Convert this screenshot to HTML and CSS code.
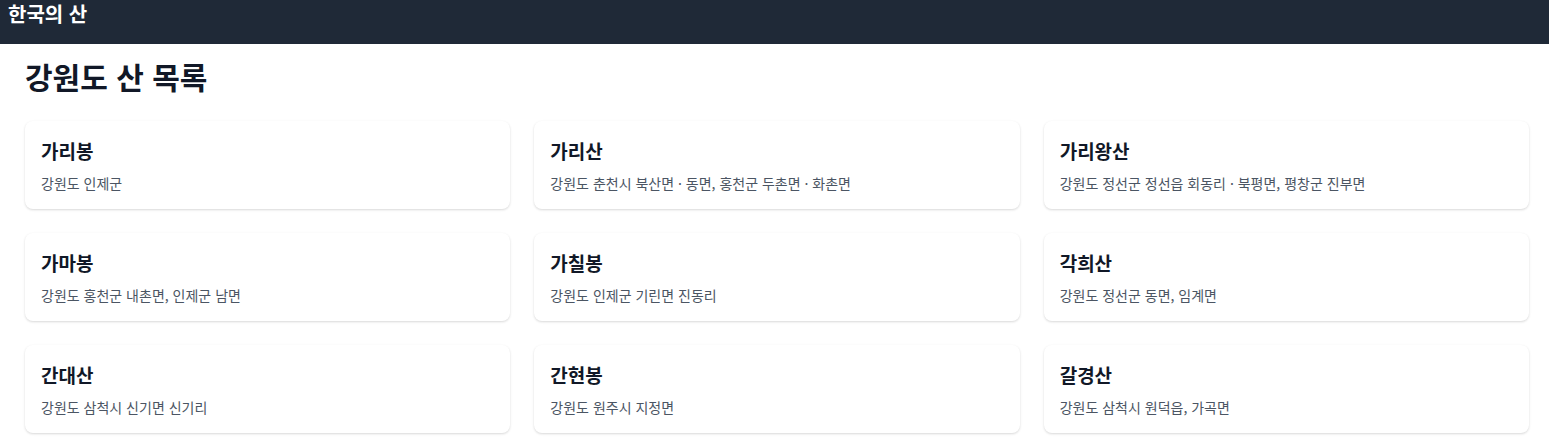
FILE: index.html
```html
<!DOCTYPE html>
<html lang="ko">
<head>
    <meta charset="utf-8">
    <title>한국의 산</title>
    <link rel="stylesheet" href="styles.css">
</head>
<body>
    <header class="top-bar">
        <span class="site-name">한국의 산</span>
    </header>

    <main class="page">
        <h1 class="page-title">강원도 산 목록</h1>

        <div class="mountain-grid">
            <div class="mountain-card">
                <h2 class="mountain-name">가리봉</h2>
                <p class="mountain-place">강원도 인제군</p>
            </div>
            <div class="mountain-card">
                <h2 class="mountain-name">가리산</h2>
                <p class="mountain-place">강원도 춘천시 북산면 · 동면, 홍천군 두촌면 · 화촌면</p>
            </div>
            <div class="mountain-card">
                <h2 class="mountain-name">가리왕산</h2>
                <p class="mountain-place">강원도 정선군 정선읍 회동리 · 북평면, 평창군 진부면</p>
            </div>
            <div class="mountain-card">
                <h2 class="mountain-name">가마봉</h2>
                <p class="mountain-place">강원도 홍천군 내촌면, 인제군 남면</p>
            </div>
            <div class="mountain-card">
                <h2 class="mountain-name">가칠봉</h2>
                <p class="mountain-place">강원도 인제군 기린면 진동리</p>
            </div>
            <div class="mountain-card">
                <h2 class="mountain-name">각희산</h2>
                <p class="mountain-place">강원도 정선군 동면, 임계면</p>
            </div>
            <div class="mountain-card">
                <h2 class="mountain-name">간대산</h2>
                <p class="mountain-place">강원도 삼척시 신기면 신기리</p>
            </div>
            <div class="mountain-card">
                <h2 class="mountain-name">간현봉</h2>
                <p class="mountain-place">강원도 원주시 지정면</p>
            </div>
            <div class="mountain-card">
                <h2 class="mountain-name">갈경산</h2>
                <p class="mountain-place">강원도 삼척시 원덕읍, 가곡면</p>
            </div>
        </div>
    </main>
</body>
</html>
```

FILE: styles.css
```css
body {
    margin: 0;
    font-family: "Noto Sans CJK KR", "Noto Sans", sans-serif;
    background-color: #ffffff;
    color: #111827;
}

.top-bar {
    background-color: #1f2937;
    color: #ffffff;
    padding: 0 8px 16px 8px;
}

.site-name {
    display: block;
    font-size: 20px;
    font-weight: bold;
    line-height: 28px;
}

.page {
    padding: 14px 20px 24px 25px;
}

.page-title {
    font-size: 30px;
    font-weight: bold;
    line-height: 36px;
    margin: 0 0 27px 0;
}

.mountain-grid {
    display: grid;
    grid-template-columns: repeat(3, 1fr);
    gap: 24px;
}

.mountain-card {
    background-color: #ffffff;
    border-radius: 8px;
    padding: 16px;
    box-shadow: 0 1px 3px rgba(0, 0, 0, 0.1), 0 1px 2px rgba(0, 0, 0, 0.06);
}

.mountain-name {
    font-size: 19px;
    font-weight: bold;
    line-height: 28px;
    margin: 0 0 8px 0;
}

.mountain-place {
    font-size: 14px;
    line-height: 20px;
    color: #4b5563;
    margin: 0;
}
```
